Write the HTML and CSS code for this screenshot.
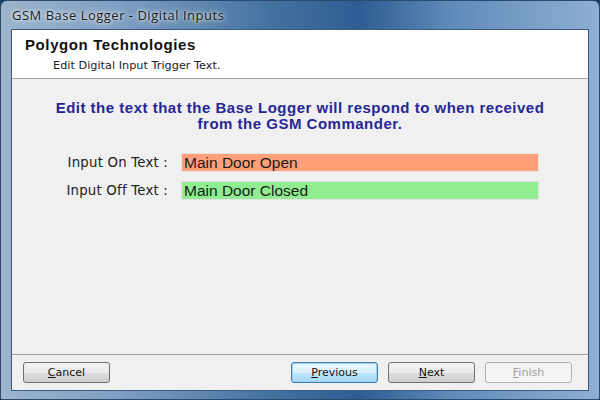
FILE: index.html
```html
<!DOCTYPE html>
<html>
<head>
<meta charset="utf-8">
<link rel="stylesheet" href="styles.css">
</head>
<body>
<div class="window">
  <div class="titlebar">GSM Base Logger - Digital Inputs</div>
  <div class="client">
    <div class="header">
      <div class="company">Polygon Technologies</div>
      <div class="subtitle">Edit Digital Input Trigger Text.</div>
    </div>
    <div class="body">
      <p class="intro">Edit the text that the Base Logger will respond to when received<br>from the GSM Commander.</p>
      <div class="form">
        <label class="lbl">Input On Text :</label>
        <div class="field on">Main Door Open</div>
        <label class="lbl">Input Off Text :</label>
        <div class="field off">Main Door Closed</div>
      </div>
    </div>
    <div class="footer">
      <button class="btn"><u>C</u>ancel</button>
      <div class="spacer"></div>
      <button class="btn focus"><u>P</u>revious</button>
      <button class="btn"><u>N</u>ext</button>
      <button class="btn disabled"><u>F</u>inish</button>
    </div>
  </div>
</div>
</body>
</html>
```
FILE: styles.css
```css
html, body { margin: 0; padding: 0; }
body { width: 600px; height: 400px; overflow: hidden; background: #1d3f66; font-family: "Liberation Sans", Arial, sans-serif; }
.window {
  width: 600px; height: 400px; box-sizing: border-box;
  display: flex; flex-direction: column;
  border-radius: 7px 7px 2px 2px;
  border: 1px solid #2a4a6e;
  background: linear-gradient(90deg, #9db4cc 0%, #7f9fc3 20%, #44729f 45%, #2d5d93 60%, #5f8ab8 75%, #8eb0d2 100%);
  padding: 0 10px 8px 10px;
}
.titlebar {
  height: 28px; box-sizing: border-box;
  padding: 5px 0 0 1px;
  font-family: "Open Sans", "DejaVu Sans", sans-serif;
  font-size: 13px; letter-spacing: 0.5px; color: #1a1a1a;
  text-shadow: 0 0 6px rgba(255,255,255,0.9), 0 0 3px rgba(255,255,255,0.8);
}
.client {
  flex: 1; display: flex; flex-direction: column;
  background: #f0f0f0;
  border: 1px solid #3b5c80;
}
.header {
  height: 49px; box-sizing: border-box;
  background: #fff;
  border-bottom: 1px solid #a0a0a0;
  padding: 6px 0 0 13px;
}
.company { font-weight: bold; font-size: 15px; letter-spacing: 0.6px; color: #111; }
.subtitle { margin: 6px 0 0 28px; color: #222; font-family: "DejaVu Sans", sans-serif; font-size: 11.3px; }
.body { flex: 1; padding-top: 21px; }
.intro {
  margin: 0; text-align: center; color: #262697;
  font-weight: bold; font-size: 15px; letter-spacing: 0.5px; line-height: 16px;
}
.form {
  display: grid; grid-template-columns: 156px 358px;
  column-gap: 13px; row-gap: 9px;
  margin-top: 21px; align-items: center;
}
.lbl { text-align: right; color: #222; font-family: "DejaVu Sans", sans-serif; font-size: 13.3px; letter-spacing: 0.2px; }
.field {
  height: 19px; box-sizing: border-box; border: 1px solid #e4e4e4;
  font-size: 15.5px; line-height: 17px; padding-left: 2px; color: #1a1a1a;
}
.on { background: #ffa07a; }
.off { background: #90ee90; }
.footer {
  height: 36px; box-sizing: border-box;
  border-top: 1px solid #a0a0a0;
  display: flex; align-items: center;
  padding: 0 16px 0 11px; gap: 10px;
}
.spacer { flex: 1; }
.btn {
  width: 87px; height: 21px; padding: 0;
  border: 1px solid #707070; border-radius: 3px;
  background: linear-gradient(#f2f2f2 0%, #ebebeb 50%, #dddddd 51%, #cfcfcf 100%);
  font-family: "DejaVu Sans", sans-serif; font-size: 11px; color: #111;
}
.btn.focus { border-color: #3c7fb1; background: linear-gradient(#eaf6fd 0%, #d9f0fc 50%, #bee6fd 51%, #a7d9f5 100%); box-shadow: inset 0 0 0 1px #9cd3f1; }
.btn.disabled { border-color: #adb2b5; background: #f4f4f4; color: #a0a0a0; }
```
